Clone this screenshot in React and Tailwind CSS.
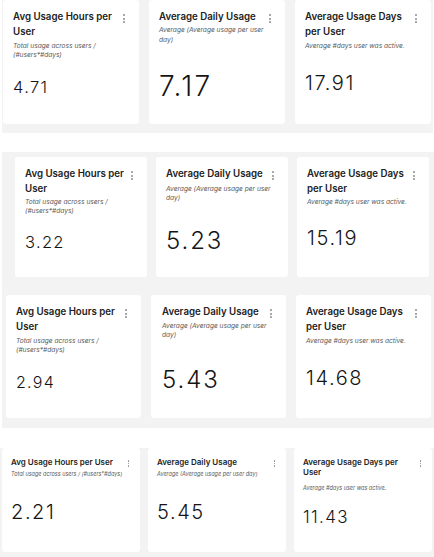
const TITLES = {
  hours: "Avg Usage Hours per User",
  daily: "Average Daily Usage",
  days: "Average Usage Days per User",
};

const DESCS = {
  hours: "Total usage across users / (#users*#days)",
  daily: "Average (Average usage per user day)",
  days: "Average #days user was active.",
};

function Kebab({ small }) {
  return (
    <div
      className={
        "absolute flex flex-col " +
        (small ? "top-[12px] right-[11px] gap-[1.2px]" : "top-[14px] right-[14px] gap-[1.7px]")
      }
    >
      {[0, 1, 2].map((i) => (
        <span
          key={i}
          className={"block rounded-full bg-[#8c8c8c] " + (small ? "w-[1.5px] h-[1.5px]" : "w-[2px] h-[2px]")}
        />
      ))}
    </div>
  );
}

function Card({ kind, value, box, title, desc, val, small }) {
  return (
    <div className={"relative bg-white rounded-[3px] shrink-0 " + box}>
      <div className={"font-semibold text-[#222] " + title}>{TITLES[kind]}</div>
      <p className={"italic text-[#5a5a5a] " + desc}>{DESCS[kind]}</p>
      <div className={"leading-none font-light tracking-[0.08em] text-[#151515] " + val}>{value}</div>
      <Kebab small={small} />
    </div>
  );
}

// shared text styles for the three larger panels
const T = "w-[104px] text-[9.7px] leading-[15.5px]";
const T2 = "w-[104px] text-[9.7px] leading-[15px]";
const D = "text-[6.6px] leading-[9.5px] w-[112px]";
const D2 = "text-[6.6px] leading-[9px] w-[104px]";

export default function App() {
  return (
    <div className="w-[434px] h-[557px] bg-white overflow-hidden font-['Inter','Liberation_Sans',sans-serif]">
      {/* panel 1 */}
      <div className="ml-[2px] w-[431px] bg-[#f3f3f3] pl-[1px] pb-[9px] flex gap-[10px]">
        <Card kind="hours" value="4.71" box="w-[136px] h-[124px] pt-[8.5px] pl-[10px]" title={T} desc={D2 + " mt-[2.5px]"} val="text-[16.5px] mt-[18.7px]" />
        <Card kind="daily" value="7.17" box="w-[136px] h-[124px] pt-[8.5px] pl-[10px]" title={T} desc={D + " mt-[2px]"} val="text-[28px] mt-[27px]" />
        <Card kind="days" value="17.91" box="w-[136px] h-[124px] pt-[8.5px] pl-[10px]" title={T} desc={D2 + " mt-[2.5px]"} val="text-[20px] mt-[21.8px]" />
      </div>

      {/* panels 2 + 3 */}
      <div className="mt-[19px] ml-[2px] w-[432px] bg-[#f3f3f3] pt-[5px] pb-[10px]">
        <div className="pl-[13px] flex gap-[9px]">
          <Card kind="hours" value="3.22" box="w-[132px] h-[120px] pt-[8.5px] pl-[10px]" title={T2} desc={D2 + " mt-[2.4px]"} val="text-[16.5px] mt-[18px]" />
          <Card kind="daily" value="5.23" box="w-[132px] h-[120px] pt-[9px] pl-[10px]" title={T2} desc={D + " mt-[3.5px]"} val="text-[24px] mt-[25px]" />
          <Card kind="days" value="15.19" box="w-[132px] h-[120px] pt-[9px] pl-[10px]" title={T2} desc={D2 + " mt-[1.8px]"} val="text-[20px] mt-[21px]" />
        </div>
        <div className="mt-[18px] pl-[4px] flex gap-[10px]">
          <Card kind="hours" value="2.94" box="w-[135px] h-[123px] pt-[9.2px] pl-[10px]" title={T2} desc={D2 + " mt-[2.9px]"} val="text-[16px] mt-[19.4px]" />
          <Card kind="daily" value="5.43" box="w-[135px] h-[123px] pt-[9.2px] pl-[11px]" title={T2} desc={D + " mt-[2.5px]"} val="text-[24px] mt-[27px]" />
          <Card kind="days" value="14.68" box="w-[135px] h-[123px] pt-[9.2px] pl-[10px]" title={T2} desc={D2 + " mt-[2.9px]"} val="text-[20px] mt-[21.7px]" />
        </div>
      </div>

      {/* panel 4 */}
      <div className="mt-[20px] w-[434px] bg-[#f3f3f3] px-[2px] pb-[5px] flex gap-[8px]">
        <Card small kind="hours" value="2.21" box="w-[138px] h-[104px] pt-[9.3px] pl-[9px]" title="w-[110px] text-[8px] leading-[10px]" desc="text-[5.5px] leading-[7.5px] mt-[4px]" val="text-[20px] mt-[23.5px]" />
        <Card small kind="daily" value="5.45" box="w-[138px] h-[104px] pt-[9.3px] pl-[9px]" title="w-[110px] text-[8px] leading-[10px]" desc="text-[5.5px] leading-[7.5px] mt-[4px]" val="text-[20px] mt-[23.5px]" />
        <Card small kind="days" value="11.43" box="w-[138px] h-[104px] pt-[9.3px] pl-[9px]" title="w-[104px] text-[8px] leading-[10px]" desc="text-[5.5px] leading-[7.5px] mt-[8px]" val="text-[17px] mt-[16.6px]" />
      </div>
    </div>
  );
}
